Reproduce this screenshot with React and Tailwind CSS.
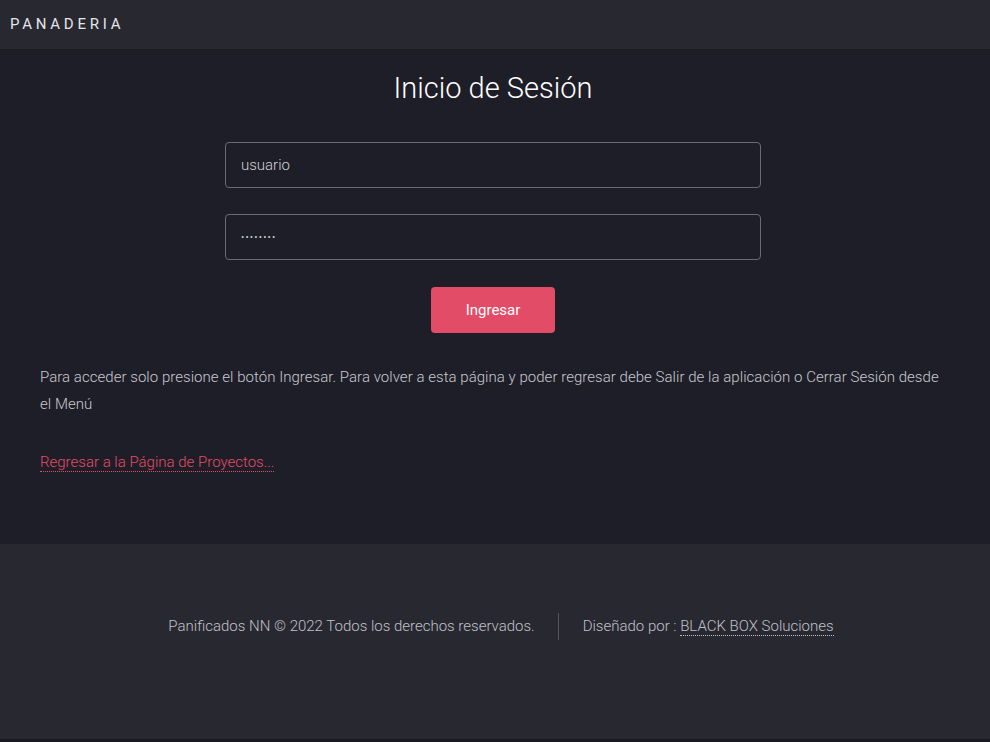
export default function App() {
  return (
    <div className="min-h-[742px] bg-[#1c1c24] font-['Roboto',sans-serif] font-light text-[#c9c9d0]">
      <header className="h-[50px] bg-[#282831] flex items-center px-[10px] border-b border-[#1a1a22]">
        <span className="text-[15px] font-normal tracking-[0.25em] text-[#e4e4ea]">PANADERIA</span>
      </header>
      <main className="bg-[#1e1e28] h-[494px] pl-[40px] pr-[44px] pt-[19px]">
        <h1 className="text-center text-[29px] font-light text-white leading-[38px]">Inicio de Sesión</h1>
        <div className="flex flex-col items-center mt-[35px]">
          <input
            className="w-[536px] h-[46px] rounded-[4px] border border-[#6a6a74] bg-transparent px-[15px] text-[15px] font-light text-[#d0d0d6] outline-none"
            defaultValue="usuario"
          />
          <input
            type="password"
            className="w-[536px] h-[46px] mt-[26px] rounded-[4px] border border-[#6a6a74] bg-transparent px-[15px] text-[10px] tracking-[0.12em] text-[#d0d0d6] outline-none"
            defaultValue="password"
          />
          <button className="mt-[27px] w-[124px] h-[46px] rounded-[4px] bg-[#e34c66] text-white text-[15px] font-normal">Ingresar</button>
        </div>
        <p className="mt-[31px] text-[15px] leading-[27px] tracking-[0.04px] text-[#c9c9d0]">
          Para acceder solo presione el botón Ingresar. Para volver a esta página y poder regresar debe Salir de la aplicación o Cerrar Sesión desde el Menú
        </p>
        <a className="inline-block mt-[35px] text-[15px] text-[#e34c66] border-b border-dotted border-[#e34c66] leading-[18px]">
          Regresar a la Página de Proyectos...
        </a>
      </main>
      <footer className="bg-[#282831] h-[195px] flex justify-center pt-[69px] pl-[12px] text-[15px] text-[#c0c0c8]">
        <div className="flex items-center h-[27px]">
          <span className="pr-[23px]">Panificados NN © 2022 Todos los derechos reservados.</span>
          <span className="w-px h-[27px] bg-[#55555e]"></span>
          <span className="pl-[24px]">
            Diseñado por :{" "}
            <span className="border-b border-dotted border-[#c0c0c8]">BLACK BOX Soluciones</span>
          </span>
        </div>
      </footer>
      <div className="h-[3px] bg-[#18181f]"></div>
    </div>
  );
}
